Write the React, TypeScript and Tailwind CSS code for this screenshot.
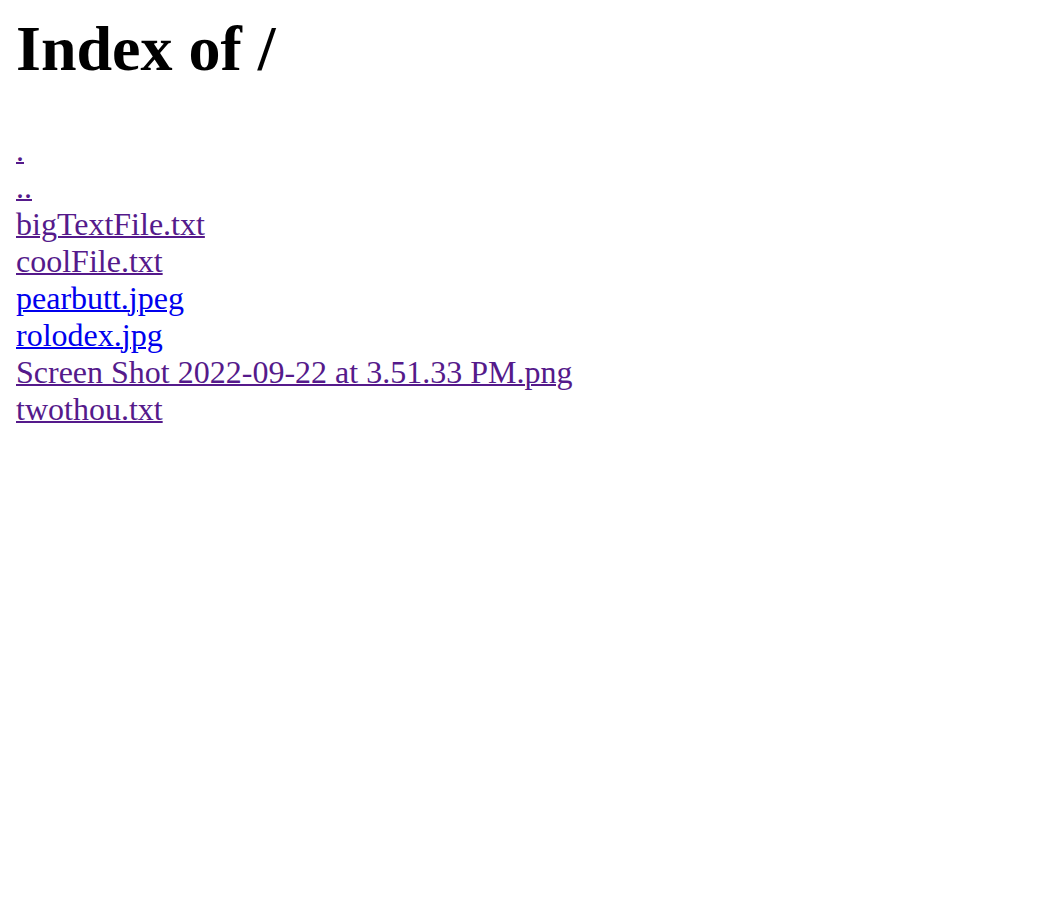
const entries = [
  { name: '.', visited: true },
  { name: '..', visited: true },
  { name: 'bigTextFile.txt', visited: true },
  { name: 'coolFile.txt', visited: true },
  { name: 'pearbutt.jpeg', visited: false },
  { name: 'rolodex.jpg', visited: false },
  { name: 'Screen Shot 2022-09-22 at 3.51.33 PM.png', visited: true },
  { name: 'twothou.txt', visited: true },
];

export default function App() {
  return (
    <div className="min-h-screen bg-white px-4 pt-3 font-['Liberation_Serif','Times_New_Roman',serif] text-black">
      <h1 className="text-[64px] font-bold leading-[74px]">Index of /</h1>
      <div className="mt-[46px] flex flex-col items-start">
        {entries.map((e) => (
          <a
            key={e.name}
            href={e.name}
            className={
              e.visited
                ? 'text-[32px] leading-[37px] text-[#551a8b] underline decoration-2'
                : 'text-[32px] leading-[37px] text-[#0000ee] underline decoration-2'
            }
          >
            {e.name}
          </a>
        ))}
      </div>
    </div>
  );
}
